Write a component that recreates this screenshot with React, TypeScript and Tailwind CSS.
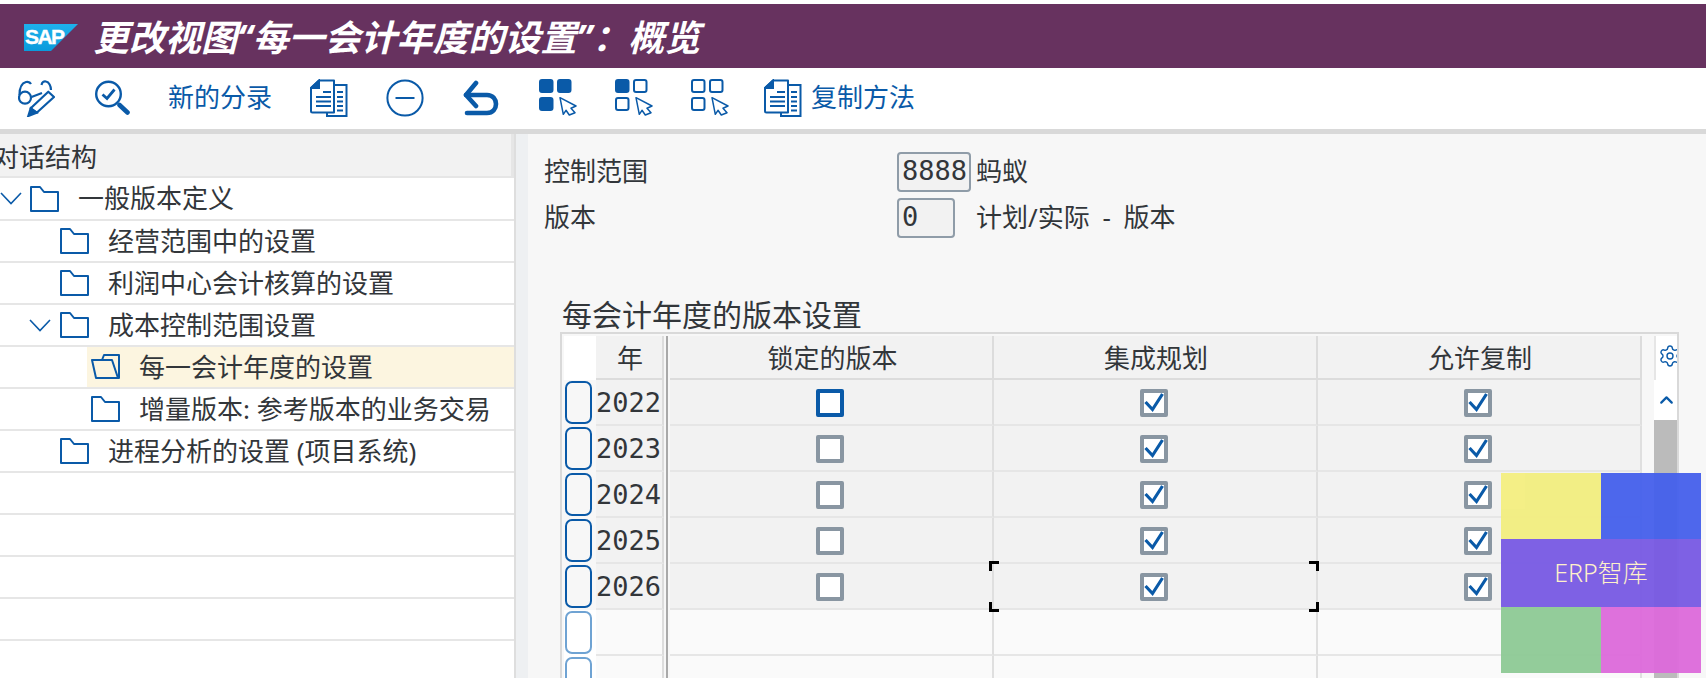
import { ChevronUp, Settings } from "lucide-react";

const BLUE = "#0a5aa8";

function SapLogo() {
  return (
    <svg width="54" height="27" viewBox="0 0 54 27" className="shrink-0">
      <defs>
        <linearGradient id="sapBlue" x1="0" y1="0" x2="0" y2="1">
          <stop offset="0" stopColor="#1eb1ec" />
          <stop offset="1" stopColor="#0a9bdc" />
        </linearGradient>
      </defs>
      <path d="M0 0H54L27 27H0Z" fill="url(#sapBlue)" />
      <text x="1" y="20" fill="#fff" stroke="#fff" strokeWidth="0.4" fontSize="21" fontWeight="700" letterSpacing="-1.6" fontFamily="Liberation Sans, sans-serif">
        SAP
      </text>
    </svg>
  );
}

function GlassesIcon() {
  return (
    <svg width="37" height="38" viewBox="0 0 37 38" fill="none" stroke={BLUE} strokeWidth="2.2" className="shrink-0">
      <circle cx="7" cy="18.7" r="6" />
      <path d="M1.5 16C1.5 9 4 4 8 3C10 2.6 12 3 13 5" />
      <path d="M23.5 6C24 3 26 2 28 2.5C31 3 33 7 33 11" />
      <path d="M13.5 18L24 14" />
      <path d="M12.7 29.3L30.3 12.7L36 18L18.7 33.7Z" strokeLinejoin="round" />
      <path d="M10.3 37L12.7 29.3L18.7 33.7Z" fill={BLUE} />
    </svg>
  );
}

function SearchCheckIcon() {
  return (
    <svg width="36" height="36" viewBox="0 0 36 36" fill="none" stroke={BLUE} className="shrink-0">
      <circle cx="14.5" cy="14" r="12.3" strokeWidth="2.4" />
      <path d="M8.5 14.5L13 18.5L20.5 9.5" strokeWidth="2.8" />
      <path d="M25.5 25L33.5 32.5" strokeWidth="4.6" strokeLinecap="round" />
    </svg>
  );
}

function DocsIcon() {
  return (
    <svg width="38" height="38" viewBox="0 0 38 38" fill="none" stroke={BLUE} strokeWidth="2" className="shrink-0">
      <path d="M9 1.5H24V33.5H2.5C1.5 33.5 1 33 1 32V9Z" strokeLinejoin="round" />
      <path d="M9 1.5V9H1Z" fill={BLUE} />
      <path d="M24.5 6H36.5V37H17V33.5" />
      <path d="M13 13H21M6 18H21M6 22.5H21M6 27H21" />
      <path d="M27 13H33M27 18H33M27 22.5H33M27 27H33M27 31.5H33" />
    </svg>
  );
}

function MinusCircleIcon() {
  return (
    <svg width="38" height="38" viewBox="0 0 38 38" fill="none" stroke={BLUE} strokeWidth="2" className="shrink-0">
      <circle cx="19" cy="19" r="17.6" />
      <path d="M9.5 19H28.5" />
    </svg>
  );
}

function BackIcon() {
  return (
    <svg width="36" height="36" viewBox="0 0 36 36" fill="none" stroke={BLUE} strokeWidth="4.6" strokeLinecap="round" strokeLinejoin="round" className="shrink-0">
      <path d="M13 3L3 15L13 26" />
      <path d="M3 15H24C36 15 36 33 24 33H4" />
    </svg>
  );
}

// filled: which of the 3 squares are solid
function GridCursorIcon({ filled }: { filled: boolean[] }) {
  const squares = [
    { x: 1, y: 1 },
    { x: 19, y: 1 },
    { x: 1, y: 19 },
  ];
  return (
    <svg width="38" height="38" viewBox="0 0 38 38" fill="none" stroke={BLUE} strokeWidth="2" className="shrink-0">
      {squares.map((s, i) => (
        <rect key={i} x={s.x} y={s.y} width="12.5" height="12" rx="2" fill={filled[i] ? BLUE : "none"} />
      ))}
      <path d="M21 18.7L37 27L32 29.3L36 33.7L30.3 36L27 31.3L24.3 35.3Z" strokeWidth="1.5" strokeLinejoin="round" />
    </svg>
  );
}

function Folder() {
  return (
    <svg width="29" height="26" viewBox="0 0 29 26" fill="none" stroke={BLUE} strokeWidth="2" className="shrink-0">
      <path d="M1 1H10L14 6H28V25H1Z" strokeLinejoin="round" />
    </svg>
  );
}

function OpenFolder() {
  return (
    <svg width="29" height="26" viewBox="0 0 29 26" fill="none" stroke={BLUE} strokeWidth="2" className="shrink-0">
      <path d="M11 6L13 1H28V24H5L1 6H21L27 24" strokeLinejoin="round" />
    </svg>
  );
}

function Chevron() {
  return (
    <svg width="22" height="13" viewBox="0 0 22 13" fill="none" stroke={BLUE} strokeWidth="1.6" className="shrink-0">
      <path d="M1 1L11 11.5L21 1" />
    </svg>
  );
}

function Checkbox({ checked, focus }: { checked?: boolean; focus?: boolean }) {
  return (
    <div className={`w-[28px] h-[28px] rounded-[2px] bg-white border-[4px] flex items-center justify-center ${focus ? "border-[#0a5aa8]" : "border-[#8996a2]"}`}>
      {checked && (
        <svg width="20" height="20" viewBox="0 0 20 20" fill="none" stroke={BLUE} strokeWidth="3.2">
          <path d="M1.5 9L8.5 16.5L18.5 1" />
        </svg>
      )}
    </div>
  );
}

const tree = [
  { label: "一般版本定义", pad: "pl-0", chevron: true, gap: "ml-[8px]", first: true },
  { label: "经营范围中的设置", pad: "pl-[60px]" },
  { label: "利润中心会计核算的设置", pad: "pl-[60px]" },
  { label: "成本控制范围设置", pad: "pl-[29px]", chevron: true, gap: "ml-[9px]" },
  { label: "每一会计年度的设置", pad: "pl-[87px]", selected: true },
  { label: "增量版本: 参考版本的业务交易", pad: "pl-[91px]" },
  { label: "进程分析的设置 (项目系统)", pad: "pl-[60px]" },
];

const years = ["2022", "2023", "2024", "2025", "2026"];

function TableRow({ year, index }: { year?: string; index: number }) {
  const filled = !!year;
  const cell = filled ? "bg-[#f2f2f2]" : "bg-[#fafafa]";
  return (
    <div className="flex h-[46px]">
      <div className={`w-[32px] shrink-0 pl-[1px] pt-[1px] ${filled ? "bg-[#f7f7f7]" : "bg-white"}`}>
        <div className={`w-[27px] h-[43px] rounded-[7px] border-2 ${filled ? "border-[#0a5aa8] bg-[#f7f7f7]" : "border-[#6fa3d3] bg-white"}`} />
      </div>
      <div className={`w-[68px] shrink-0 border-r-2 border-r-[#dcdcdc] border-b-2 border-b-[#e6e6e6] text-[27px] leading-[46px] ${cell}`} style={{ fontFamily: '"DejaVu Sans Mono", monospace' }}>
        {year}
      </div>
      <div className="w-[2px] shrink-0 ml-[2px] mr-[2px] bg-[#a9a9a9]" />
      {[0, 1, 2].map((col) => (
        <div
          key={col}
          className={`w-[324px] shrink-0 border-r-2 border-r-[#dfdfdf] border-b-2 border-b-[#e6e6e6] flex items-center justify-center pr-[2px] pt-[2px] ${cell} ${col === 1 && index === 4 ? "relative" : ""}`}
        >
          {filled && <Checkbox checked={col > 0} focus={col === 0 && index === 0} />}
          {col === 1 && index === 4 && (
            <>
              <span className="absolute left-[-5px] top-[-3px] w-[10px] h-[10px] border-l-[3px] border-t-[3px] border-black" />
              <span className="absolute left-[-5px] bottom-[-4px] w-[10px] h-[10px] border-l-[3px] border-b-[3px] border-black" />
              <span className="absolute right-[-3px] top-[-3px] w-[10px] h-[10px] border-r-[3px] border-t-[3px] border-black" />
              <span className="absolute right-[-3px] bottom-[-4px] w-[10px] h-[10px] border-r-[3px] border-b-[3px] border-black" />
            </>
          )}
        </div>
      ))}
    </div>
  );
}

export default function App() {
  return (
    <div
      className="relative w-full h-[678px] overflow-hidden bg-white text-[#32363a] text-[26px]"
      style={{ fontFamily: '"Noto Sans", "Noto Sans CJK SC", sans-serif' }}
    >
      {/* Title bar */}
      <div className="mt-[4px] h-[64px] bg-[#67325f] flex items-center pl-[24px] pt-[3px]">
        <SapLogo />
        <h1 className="ml-[15px] text-[36px] font-bold italic text-white leading-none">更改视图“每一会计年度的设置”：概览</h1>
      </div>

      {/* Toolbar */}
      <div className="h-[61px] flex items-center text-[#0a5aa8] pb-[2px]">
        <div className="ml-[18px]"><GlassesIcon /></div>
        <div className="ml-[39px]"><SearchCheckIcon /></div>
        <span className="ml-[38px] whitespace-nowrap">新的分录</span>
        <div className="ml-[38px]"><DocsIcon /></div>
        <div className="ml-[38px]"><MinusCircleIcon /></div>
        <div className="ml-[39px]"><BackIcon /></div>
        <div className="ml-[40px]"><GridCursorIcon filled={[true, true, true]} /></div>
        <div className="ml-[38px]"><GridCursorIcon filled={[true, false, false]} /></div>
        <div className="ml-[38px]"><GridCursorIcon filled={[false, false, false]} /></div>
        <div className="ml-[35px]"><DocsIcon /></div>
        <span className="ml-[9px] whitespace-nowrap">复制方法</span>
      </div>
      <div className="h-[5px] bg-[#d9d9d9]" />

      <div className="flex h-[545px]">
        {/* Dialog structure tree */}
        <aside className="w-[516px] shrink-0 border-r-2 border-r-[#dedede] bg-white overflow-hidden">
          <div className="h-[44px] bg-[#f2f2f2] border-b-2 border-b-[#e6e6e6] border-r-[3px] border-r-[#e6e6e6] leading-[46px] whitespace-nowrap">
            <span className="-ml-[7px] inline-block">对话结构</span>
          </div>
          {tree.map((t) => (
            <div key={t.label} className={`${t.first ? "h-[43px]" : "h-[42px]"} border-b-2 border-b-[#e6e6e6] flex ${t.pad}`}>
              <div className={`flex-1 flex items-center whitespace-nowrap ${t.selected ? "bg-[#fcf5e0] pl-[4px]" : ""}`}>
                {t.chevron && <Chevron />}
                <div className={t.gap ?? ""}>{t.selected ? <OpenFolder /> : <Folder />}</div>
                <span className="ml-[19px]">{t.label}</span>
              </div>
            </div>
          ))}
          {[0, 1, 2, 3, 4, 5].map((i) => (
            <div key={i} className="h-[42px] border-b-2 border-b-[#e6e6e6]" />
          ))}
        </aside>

        <div className="w-[12px] shrink-0 bg-[#eef0f2]" />

        {/* Detail area */}
        <main className="flex-1 bg-[#f7f7f7] pt-[18px] pl-[16px]">
          <div className="flex h-[40px] items-center">
            <span className="w-[353px] shrink-0 pb-[2px]">控制范围</span>
            <div className="w-[74px] h-[40px] rounded-[4px] border-2 border-[#8f9ca8] bg-[#f2f2f2] pl-[3px] text-[27px] leading-[34px]" style={{ fontFamily: '"DejaVu Sans Mono", monospace' }}>
              8888
            </div>
            <span className="ml-[5px] pb-[2px]">蚂蚁</span>
          </div>
          <div className="flex h-[40px] items-center mt-[6px]">
            <span className="w-[353px] shrink-0 pb-[2px]">版本</span>
            <div className="w-[58px] h-[40px] rounded-[4px] border-2 border-[#8f9ca8] bg-[#f2f2f2] pl-[3px] text-[27px] leading-[34px]" style={{ fontFamily: '"DejaVu Sans Mono", monospace' }}>
              0
            </div>
            <span className="ml-[21px] pb-[2px] [word-spacing:6px]">计划/实际 - 版本</span>
          </div>

          <div className="ml-[18px] mt-[60px] text-[30px] leading-[34px]">每会计年度的版本设置</div>

          <div className="ml-[16px] mr-[27px] border-2 border-[#d9d9d9] pt-[2px] pl-[2px] flex">
            <div className="flex-1">
              {/* Column headers */}
              <div className="flex h-[44px]">
                <div className="w-[32px] shrink-0 bg-white" />
                <div className="w-[68px] shrink-0 bg-[#f2f2f2] border-r-2 border-r-[#dcdcdc] border-b-2 border-b-[#dcdcdc] flex items-center justify-center pl-[2px] pt-[3px]">年</div>
                <div className="w-[2px] shrink-0 ml-[2px] mr-[2px] bg-[#a9a9a9]" />
                {["锁定的版本", "集成规划", "允许复制"].map((h, i) => (
                  <div key={h} className={`w-[324px] shrink-0 bg-[#f2f2f2] border-r-2 border-r-[#dcdcdc] border-b-2 border-b-[#dcdcdc] flex items-center justify-center pt-[3px] ${i === 0 ? "pl-[3px]" : "pl-[2px]"}`}>
                    {h}
                  </div>
                ))}
              </div>
              {[...years, undefined, undefined].map((y, i) => (
                <TableRow key={i} year={y} index={i} />
              ))}
            </div>

            {/* Scrollbar column */}
            <div className="w-[23px] shrink-0">
              <div className="h-[44px] bg-white overflow-hidden pl-[2px] pt-[8px] border-l-2 border-l-[#e6e6e6]">
                <Settings size={24} strokeWidth={1.4} color={BLUE} className="min-w-[24px]" />
              </div>
              <div className="h-[40px] bg-white flex items-center justify-center pl-[2px]">
                <ChevronUp size={26} strokeWidth={2.5} color={BLUE} />
              </div>
              <div className="h-[280px] bg-[#bbbbbb]" />
            </div>
          </div>
        </main>
      </div>

      {/* ERP watermark */}
      <div className="absolute left-[1501px] top-[473px] w-[200px] h-[200px] opacity-95 flex flex-col">
        <div className="h-[66px] flex">
          <div className="flex-1 bg-[#f3ee80]" />
          <div className="flex-1 bg-[#4560ec]" />
        </div>
        <div className="h-[68px] bg-[#785ae4] flex items-center justify-center text-[25px] text-[#fff0c8] font-light">ERP智库</div>
        <div className="h-[66px] flex">
          <div className="flex-1 bg-[#8eca95]" />
          <div className="flex-1 bg-[#dd6adb]" />
        </div>
      </div>
    </div>
  );
}
